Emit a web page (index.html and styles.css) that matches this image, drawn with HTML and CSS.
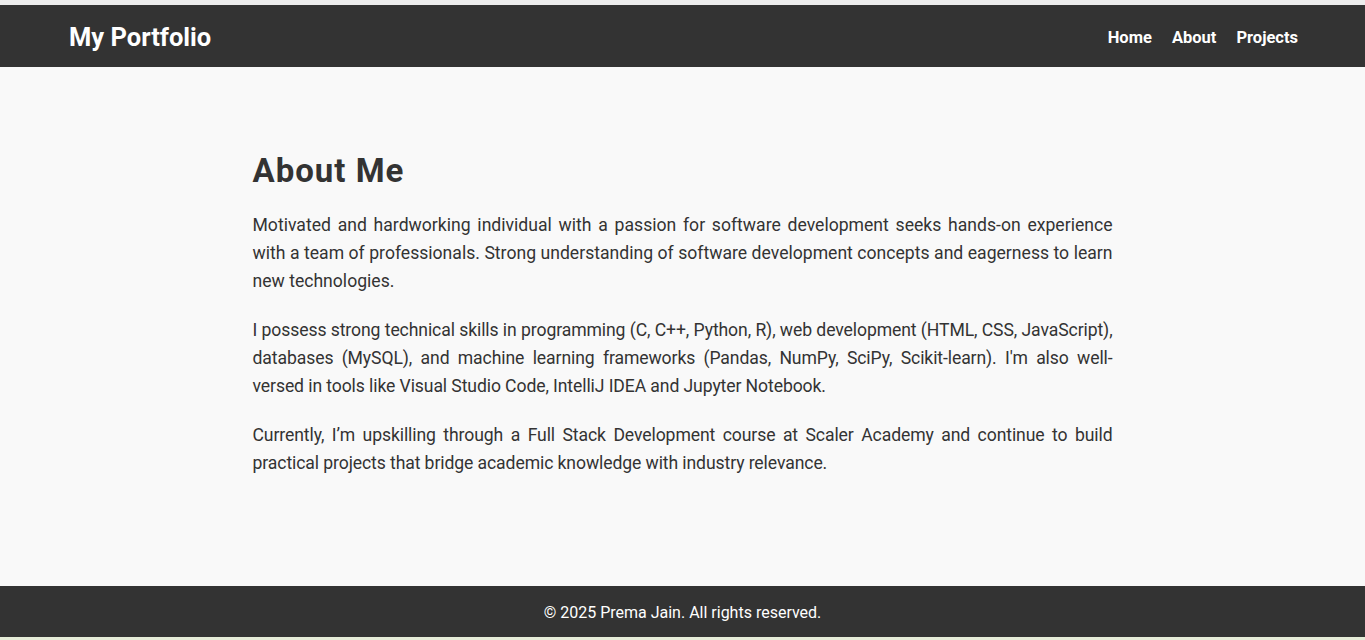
FILE: index.html
```html
<!DOCTYPE html>
<html lang="en">
<head>
<meta charset="UTF-8">
<title>My Portfolio</title>
<link rel="stylesheet" href="styles.css">
</head>
<body>
<div class="page">
  <header class="site-header">
    <div class="logo">My Portfolio</div>
    <nav class="nav">
      <a href="#">Home</a>
      <a href="#">About</a>
      <a href="#">Projects</a>
    </nav>
  </header>
  <main class="main">
    <section class="about">
      <h2>About Me</h2>
      <p class="intro">Motivated and hardworking individual with a passion for software development seeks hands-on experience with a team of professionals. Strong understanding of software development concepts and eagerness to learn new technologies.</p>
      <p>I possess strong technical skills in programming (C, C++, Python, R), web development (HTML, CSS, JavaScript), databases (MySQL), and machine learning frameworks (Pandas, NumPy, SciPy, Scikit-learn). I'm also well-versed in tools like Visual Studio Code, IntelliJ IDEA and Jupyter Notebook.</p>
      <p>Currently, I’m upskilling through a Full Stack Development course at Scaler Academy and continue to build practical projects that bridge academic knowledge with industry relevance.</p>
    </section>
  </main>
  <footer class="site-footer">© 2025 Prema Jain. All rights reserved.</footer>
</div>
</body>
</html>
```

FILE: styles.css
```css
* { box-sizing: border-box; }
html, body { margin: 0; padding: 0; }
body {
  font-family: "Segoe UI", Roboto, "Noto Sans", sans-serif;
  background: #e6ecd8;
  color: #333;
}
.page {
  height: 637px;
  display: flex;
  flex-direction: column;
  border-top: 5px solid #ededed;
  background: #f9f9f9;
}
.site-header {
  background: #333;
  color: #fff;
  height: 62px;
  display: flex;
  align-items: center;
  justify-content: space-between;
  padding: 2px 67px 0 69px;
}
.logo {
  font-size: 25.5px;
  font-weight: 700;
}
.nav {
  display: flex;
  gap: 20px;
}
.nav a {
  color: #fff;
  text-decoration: none;
  font-weight: 700;
  font-size: 16.5px;
}
.main {
  flex: 1;
  padding-top: 85px;
}
.about {
  max-width: 860px;
  margin: 0 auto;
}
.about h2 {
  font-size: 33px;
  letter-spacing: 1px;
  margin: 0 0 21px;
  line-height: 38px;
  color: #333;
}
.about p {
  font-size: 17.6px;
  line-height: 28px;
  letter-spacing: -0.1px;
  margin: 0 0 21px;
  text-align: justify;
}
.about p.intro {
  letter-spacing: 0;
}
.site-footer {
  background: #333;
  color: #fff;
  height: 51px;
  padding-top: 2px;
  display: flex;
  align-items: center;
  justify-content: center;
  font-size: 16px;
}
```
